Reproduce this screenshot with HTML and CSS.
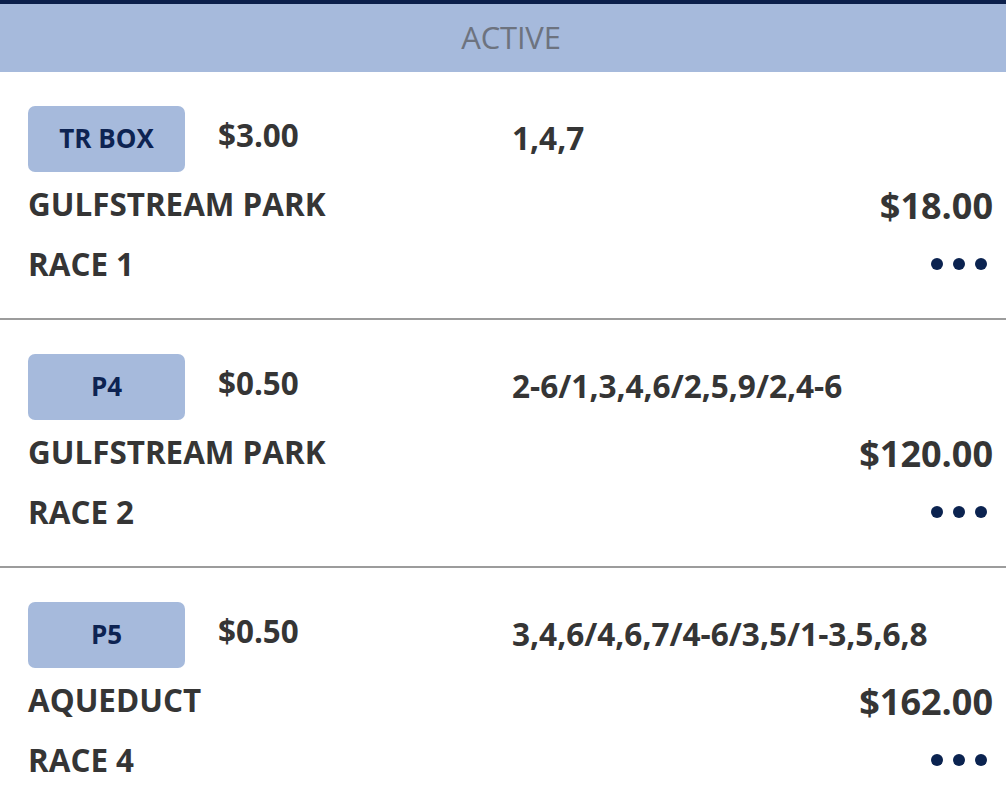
FILE: index.html
```html
<!DOCTYPE html>
<html>
<head>
<meta charset="utf-8">
<link rel="stylesheet" href="styles.css">
</head>
<body>
<div class="topbar"></div>
<header class="section-head">ACTIVE</header>
<main class="list">
  <article class="card">
    <div class="row row-top">
      <span class="badge">TR BOX</span>
      <span class="amount">$3.00</span>
      <span class="sel">1,4,7</span>
    </div>
    <div class="row row-mid">
      <span class="track">GULFSTREAM PARK</span>
      <span class="total">$18.00</span>
    </div>
    <div class="row row-bot">
      <span class="race">RACE 1</span>
      <span class="dots"><i></i><i></i><i></i></span>
    </div>
  </article>
  <article class="card">
    <div class="row row-top">
      <span class="badge">P4</span>
      <span class="amount">$0.50</span>
      <span class="sel">2-6/1,3,4,6/2,5,9/2,4-6</span>
    </div>
    <div class="row row-mid">
      <span class="track">GULFSTREAM PARK</span>
      <span class="total">$120.00</span>
    </div>
    <div class="row row-bot">
      <span class="race">RACE 2</span>
      <span class="dots"><i></i><i></i><i></i></span>
    </div>
  </article>
  <article class="card">
    <div class="row row-top">
      <span class="badge">P5</span>
      <span class="amount">$0.50</span>
      <span class="sel">3,4,6/4,6,7/4-6/3,5/1-3,5,6,8</span>
    </div>
    <div class="row row-mid">
      <span class="track">AQUEDUCT</span>
      <span class="total">$162.00</span>
    </div>
    <div class="row row-bot">
      <span class="race">RACE 4</span>
      <span class="dots"><i></i><i></i><i></i></span>
    </div>
  </article>
</main>
</body>
</html>
```
FILE: styles.css
```css
* { box-sizing: border-box; }
html, body { margin: 0; padding: 0; background: #fff; }
body {
  font-family: "Open Sans", "Noto Sans", sans-serif;
  color: #353535;
  overflow: hidden;
}
.topbar { height: 4px; background: #0b1f4b; }
.section-head {
  height: 68px;
  background: #a6badc;
  color: #6d737f;
  font-size: 31px;
  font-weight: 400;
  display: flex;
  align-items: center;
  justify-content: center;
  padding: 0 0 3px 16px;
  letter-spacing: -0.2px;
}
.card {
  height: 248px;
  border-bottom: 2px solid #9c9c9c;
  padding: 34px 13px 0 28px;
}
.row { display: flex; align-items: center; }
.row-top { height: 66px; }
.badge {
  width: 157px;
  height: 66px;
  border-radius: 7px;
  background: #a6badc;
  color: #0d2352;
  font-weight: 700;
  font-size: 26px;
  display: flex;
  align-items: center;
  justify-content: center;
  padding-bottom: 3px;
  margin-right: 33px;
}
.amount {
  width: 294px;
  font-weight: 700;
  font-size: 31.4px;
  margin-top: -10px;
}
.sel {
  font-weight: 700;
  font-size: 31.6px;
  margin-top: -4px;
}
.row-mid {
  justify-content: space-between;
  margin-top: 11px;
  height: 40px;
}
.track { font-weight: 700; font-size: 31.4px; }
.total { font-weight: 700; font-size: 36px; margin-top: 4px; }
.row-bot {
  justify-content: space-between;
  margin-top: 20px;
  height: 40px;
}
.race { font-weight: 700; font-size: 31.4px; }
.dots { display: flex; gap: 10px; margin-right: 6px; margin-top: 2px; }
.dots i {
  display: block;
  width: 12px;
  height: 12px;
  border-radius: 50%;
  background: #0b2350;
}
```
